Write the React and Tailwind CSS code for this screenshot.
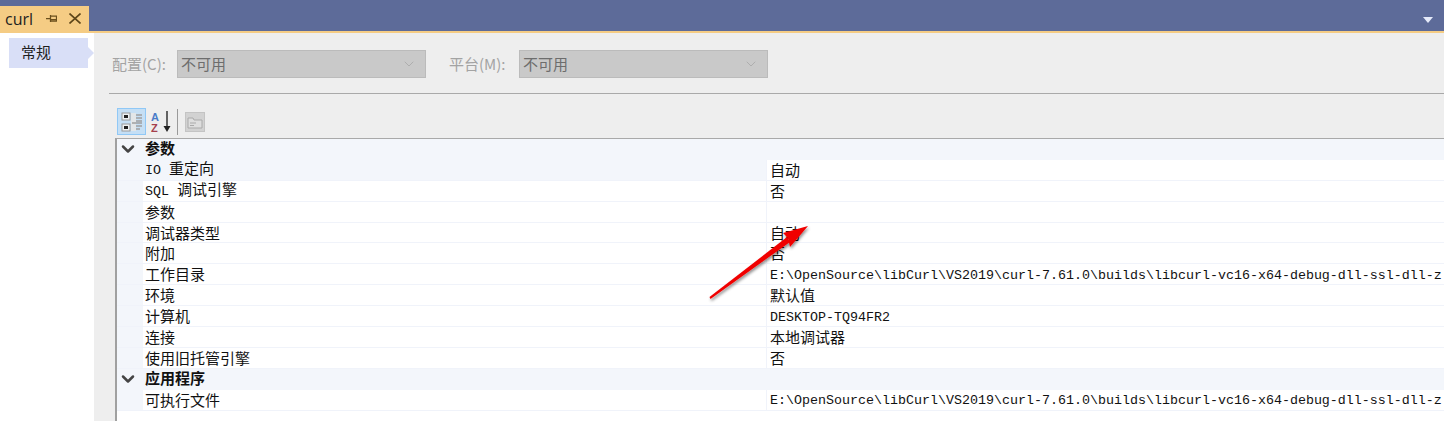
import { ChevronDown } from 'lucide-react';

// Latin runs sit at 8px per char, CJK runs at 15px per char, like the bitmap font in the dialog
const Mixed = ({ text }) => {
  const parts = text.match(/[\x20-\x7e]+|[^\x20-\x7e]+/g) || [];
  return (
    <span className="whitespace-pre">
      {parts.map((p, i) =>
        /^[\x20-\x7e]/.test(p) ? (
          <span key={i} className="text-[13.33px] font-['Liberation_Mono',monospace]">{p}</span>
        ) : (
          <span key={i} className="text-[15px] font-['Noto_Sans_CJK_SC',sans-serif]">{p}</span>
        )
      )}
    </span>
  );
};

const PropRow = ({ name, value, selected }) => (
  <div className="flex h-[20.9px] border-b border-[#f0f3fa] shrink-0">
    <div className="w-[26px] bg-[#f3f6fb] shrink-0" />
    <div className={`w-[623px] pl-[2px] pb-[1px] flex items-center leading-[19px] text-[#111] shrink-0 ${selected ? 'bg-[#f3f6fb]' : ''}`}>
      <Mixed text={name} />
    </div>
    <div className="flex-1 border-l border-[#f0f3fa] pl-[3px] pb-[1px] flex items-center leading-[19px] text-[#111] whitespace-nowrap min-w-0">
      <Mixed text={value} />
    </div>
  </div>
);

const GroupRow = ({ name }) => (
  <div className="flex items-center h-[20.9px] bg-[#f3f6fb] shrink-0">
    <div className="w-[26px] pl-[1px] flex justify-start">
      <ChevronDown className="w-5 h-5 text-[#444]" strokeWidth={3} />
    </div>
    <div className="pl-[2px] text-[15px] font-bold leading-[20px] pb-[2px] text-[#111] font-['Noto_Sans_CJK_SC',sans-serif]">{name}</div>
  </div>
);

const FakeSelect = ({ label, labelWidth }) => (
  <div className="flex items-center">
    <span className={`text-[15px] leading-[20px] pb-[1px] text-[#a3a3a3] font-['Noto_Sans_CJK_SC',sans-serif] whitespace-nowrap ${labelWidth}`}>{label}</span>
    <div className="w-[249px] h-[28px] bg-[#c9c9c9] border border-[#bbbbbb] flex items-center justify-between pl-[3px] pr-[8px]">
      <span className="text-[15px] leading-[20px] pb-[1px] text-[#6d6d6d] font-['Noto_Sans_CJK_SC',sans-serif]">不可用</span>
      <ChevronDown className="w-4 h-4 text-[#a8a8a8]" strokeWidth={1.25} />
    </div>
  </div>
);

const path = 'E:\\OpenSource\\libCurl\\VS2019\\curl-7.61.0\\builds\\libcurl-vc16-x64-debug-dll-ssl-dll-z';

const App = () => {
  return (
    <div className="relative w-[1444px] h-[421px] overflow-hidden flex flex-col bg-[#eeeeee] font-['Noto_Sans_CJK_SC',sans-serif]">
      {/* title strip */}
      <div className="h-[33px] bg-[#5d6b99] border-b-2 border-[#f5cc84] flex items-end justify-between shrink-0">
        <div className="w-[89px] h-[25px] bg-[#f5cc84] flex items-center pl-[5px]">
          <span className="text-[16px] leading-none text-[#1e1e1e] font-['Open_Sans',sans-serif]">curl</span>
          <svg className="ml-[13px]" width="11" height="11" viewBox="0 0 11 11" fill="none" stroke="#6b4f1d" strokeWidth="1.25">
            <path d="M0 5.5h4M4.5 2v7M4.5 3h6v5h-6M4.5 6.5h6" />
          </svg>
          <svg className="ml-[12px]" width="12" height="11" viewBox="0 0 12 11" fill="none" stroke="#5c4519" strokeWidth="1.6">
            <path d="M0.5 0.5l11 10M11.5 0.5l-11 10" />
          </svg>
        </div>
        <svg className="mr-[11px] mb-[8px]" width="10" height="6" viewBox="0 0 10 6">
          <path d="M0 0h10L5 6z" fill="#e6ebfa" />
        </svg>
      </div>

      <div className="flex flex-1 min-h-0">
        {/* left nav */}
        <div className="w-[94px] bg-white pt-[5px] pl-[9px] shrink-0">
          <div className="relative w-[79px] h-[30px] bg-[#d9dff7] flex items-center pl-[12px] pb-[1px] text-[15px] text-[#1e1e1e]">
            常规
            <div className="absolute -right-[6px] top-[9px] w-0 h-0 border-y-[6px] border-y-transparent border-l-[6px] border-l-[#d9dff7]" />
          </div>
        </div>

        {/* right panel */}
        <div className="flex-1 flex flex-col min-w-0">
          <div className="flex items-center pl-[18px] pt-[17px] gap-[23px]">
            <FakeSelect label="配置(C):" labelWidth="w-[65px]" />
            <FakeSelect label="平台(M):" labelWidth="w-[70px]" />
          </div>
          <div className="h-[1px] bg-[#a9a9a9] ml-[15px] mt-[15px]" />

          {/* property toolbar */}
          <div className="flex items-center h-[27px] ml-[23px] mt-[14px]">
            <div className="w-[29px] h-[27px] bg-[#c5dff5] border border-[#90c8f6] flex items-center justify-center">
              <svg width="22" height="22" viewBox="0 0 22 22">
                <rect x="1" y="2" width="8" height="7" fill="#eef2f4" stroke="#9a9a9a" />
                <rect x="1" y="13" width="8" height="7" fill="#eef2f4" stroke="#9a9a9a" />
                <rect x="3" y="4" width="4" height="3" fill="#222" />
                <rect x="3" y="15" width="4" height="3" fill="#222" />
                <path d="M10 2h5v18h-5z" fill="#e3e6e8" />
                <path d="M15 4h6M15 7h6M15 10h6M11 12h10M15 15h6M15 18h4" stroke="#a0a0a0" strokeWidth="1.5" />
              </svg>
            </div>
            <div className="w-[31px] h-[27px] flex items-center justify-center">
              <svg width="22" height="26" viewBox="0 0 22 26">
                <text x="0" y="12" fontSize="11" fontWeight="700" fill="#4a7cc8" fontFamily="Liberation Sans">A</text>
                <text x="0" y="23" fontSize="11" fontWeight="700" fill="#a5404c" fontFamily="Liberation Sans">Z</text>
                <path d="M16 2v17" stroke="#333" strokeWidth="1.5" />
                <path d="M12.5 17h7L16 23z" fill="#222" />
              </svg>
            </div>
            <div className="w-[1px] h-[26px] bg-[#9a9a9a]" />
            <div className="ml-[7px] w-[20px] h-[20px] bg-[#d2d2d2] border border-[#c4c4c4] flex items-center justify-center">
              <svg width="16" height="14" viewBox="0 0 16 14" fill="#dedede" stroke="#aaaaaa">
                <path d="M1 3h5l1 2h8v8H1z" />
                <path d="M3 8h6M3 10.5h4" fill="none" />
              </svg>
            </div>
          </div>

          {/* property grid */}
          <div className="flex-1 bg-white ml-[21px] mt-[3px] border-l-2 border-t border-l-[#a0a0a0] border-t-[#a9a9a9] flex flex-col min-w-0 overflow-hidden">
            <GroupRow name="参数" />
            <PropRow name="IO 重定向" value="自动" selected />
            <PropRow name="SQL 调试引擎" value="否" />
            <PropRow name="参数" value="" />
            <PropRow name="调试器类型" value="自动" />
            <PropRow name="附加" value="否" />
            <PropRow name="工作目录" value={path} />
            <PropRow name="环境" value="默认值" />
            <PropRow name="计算机" value="DESKTOP-TQ94FR2" />
            <PropRow name="连接" value="本地调试器" />
            <PropRow name="使用旧托管引擎" value="否" />
            <GroupRow name="应用程序" />
            <PropRow name="可执行文件" value={path} />
          </div>
        </div>
      </div>

      {/* red annotation arrow drawn over the grid */}
      <svg className="absolute left-[700px] top-[215px]" width="120" height="95" viewBox="0 0 120 95">
        <defs>
          <filter id="arrowShadow" x="-20%" y="-20%" width="140%" height="140%">
            <feDropShadow dx="1" dy="2" stdDeviation="1.5" floodColor="#000" floodOpacity="0.45" />
          </filter>
        </defs>
        <g filter="url(#arrowShadow)">
          <path d="M9.5 82L10.5 84L90 27L87 22z" fill="#f00000" />
          <path d="M108 11L83 18L88 23L90 32z" fill="#f00000" />
        </g>
      </svg>
    </div>
  );
};

export default App;
